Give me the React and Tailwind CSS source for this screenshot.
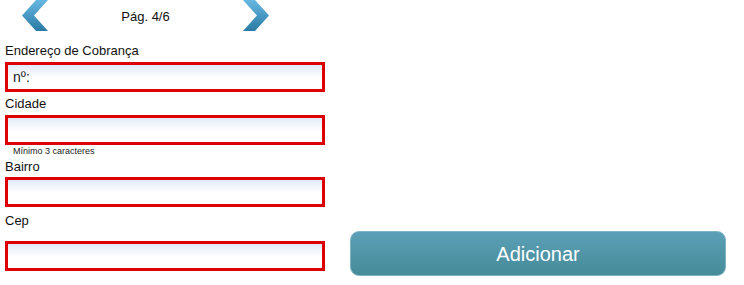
import React from 'react'

const field = "h-[30px] w-[320px] border-[3px] border-[#dd0000] bg-[linear-gradient(to_bottom,#e3eaf8_0%,#ffffff_55%)] flex items-center"

const Chevron = ({ dir }) => (
  <svg width="27" height="31" viewBox="0 0 27 31" className="block">
    <defs>
      <linearGradient id={`g-${dir}`} x1="0" y1="0" x2="0" y2="1">
        <stop offset="0" stopColor="#66b8e3" />
        <stop offset="1" stopColor="#2a7aa3" />
      </linearGradient>
    </defs>
    {dir === 'left' ? (
      <polygon points="0,15.5 14,0 26,0 12,15.5 26,31 14,31" fill={`url(#g-${dir})`} />
    ) : (
      <polygon points="27,15.5 13,0 1,0 15,15.5 1,31 13,31" fill={`url(#g-${dir})`} />
    )}
  </svg>
)

export default function App() {
  return (
    <div className="w-[744px] h-[285px] bg-white font-['Liberation_Sans',Arial,sans-serif] text-[#111]">
      {/* paginação */}
      <div className="flex items-start pl-[22px] h-[32px]">
        <Chevron dir="left" />
        <div className="w-[193px] text-center text-[13px] leading-[15px] pt-[9px]">Pág. 4/6</div>
        <Chevron dir="right" />
      </div>

      <div className="flex items-end">
        <div className="ml-[5px] w-[320px] flex flex-col pb-[5px]">
          <div className="text-[13px] leading-[15px] mt-[11px] mb-[4px]">Endereço de Cobrança</div>
          <div className={field}>
            <span className="pl-[5px] text-[14px] text-[#222]">nº:</span>
          </div>

          <div className="text-[13px] leading-[15px] mt-[4px] mb-[4px]">Cidade</div>
          <div className={field}></div>
          <div className="pl-[8px] text-[9px] leading-[10px] mt-[1px] text-[#222]">Mínimo 3 caracteres</div>

          <div className="text-[13px] leading-[15px] mt-[3px] mb-[3px]">Bairro</div>
          <div className={field}></div>

          <div className="text-[13px] leading-[15px] mt-[6px] mb-[13px]">Cep</div>
          <div className={field}></div>
        </div>

        <button className="ml-[25px] w-[376px] h-[45px] rounded-[9px] border border-[#7fb3c4] bg-[linear-gradient(to_bottom,#5ca0b7,#458b98)] text-white text-[20px] flex items-center justify-center">
          Adicionar
        </button>
      </div>
    </div>
  )
}
